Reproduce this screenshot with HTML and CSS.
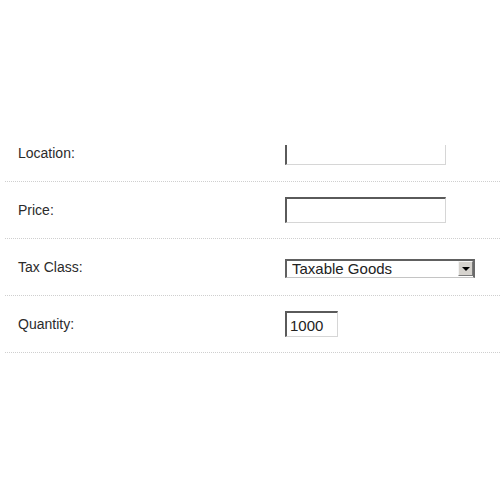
FILE: index.html
```html
<!DOCTYPE html>
<html lang="en">
<head>
  <meta charset="UTF-8">
  <title>Product Options</title>
  <link rel="stylesheet" href="styles.css">
</head>
<body>
  <div class="form">
    <!-- location -->
    <div class="row">
      <label class="label" for="location">Location:</label>
      <div class="field">
        <div class="clip">
          <input type="text" id="location" class="text wide">
        </div>
      </div>
    </div>

    <div class="row">
      <label class="label" for="price">Price:</label>
      <div class="field">
        <input type="text" id="price" class="text wide">
      </div>
    </div>

    <div class="row">
      <label class="label" for="taxClass">Tax Class:</label>
      <div class="field">
        <div class="select-box">
          <select id="taxClass" class="select">
            <option>Taxable Goods</option>
            <option>None</option>
          </select>
          <span class="select-btn"><span class="arrow"></span></span>
        </div>
      </div>
    </div>

    <div class="row">
      <label class="label" for="qty">Quantity:</label>
      <div class="field">
        <input type="text" id="qty" class="text short" value="1000">
      </div>
    </div>
  </div>
</body>
</html>
```

FILE: styles.css
```css
body {
  margin: 0;
  padding: 125px 0 0 5px;
  background: #fff;
  font-family: "Liberation Sans", Arial, sans-serif;
  color: #2b2b2b;
}
.form {
  width: 495px;
}
.row {
  display: grid;
  grid-template-columns: 280px 1fr;
  align-items: center;
  height: 56px;
  border-bottom: 1px dotted #cfcfcf;
}
.label {
  padding-left: 13px;
  font-size: 14px;
}
.clip {
  height: 20px;
  margin-top: 4px;
  overflow: hidden;
}
.clip .text {
  margin-top: -6px;
}
.text {
  display: block;
  box-sizing: border-box;
  height: 26px;
  padding: 2px 3px 0;
  border-style: solid;
  border-width: 2px 1px 1px 2px;
  border-color: #5a5a5a #d6d6d6 #d6d6d6 #5a5a5a;
  background: #fff;
  font-family: "Liberation Sans", Arial, sans-serif;
  font-size: 15px;
  color: #222;
  outline: none;
}
.wide {
  width: 161px;
}
.short {
  width: 53px;
}
.select-box {
  position: relative;
  width: 190px;
  height: 19px;
  margin-top: 3px;
}
.select {
  display: block;
  box-sizing: border-box;
  width: 190px;
  height: 19px;
  padding: 0 0 1px 5px;
  border-style: solid;
  border-width: 2px 2px 1px 2px;
  border-color: #606060 #6a6a6a #c4c4c4 #606060;
  border-radius: 0;
  background: #fff;
  appearance: none;
  -webkit-appearance: none;
  font-family: "Liberation Sans", Arial, sans-serif;
  font-size: 15px;
  line-height: 15px;
  color: #222;
}
.select-btn {
  position: absolute;
  top: 2px;
  right: 2px;
  box-sizing: border-box;
  width: 15px;
  height: 15px;
  background: #d6d3ce;
  border-style: solid;
  border-width: 1px;
  border-color: #f4f4f4 #7a7a7a #7a7a7a #f4f4f4;
  display: flex;
  align-items: center;
  justify-content: center;
}
.arrow {
  width: 0;
  height: 0;
  border-left: 4px solid transparent;
  border-right: 4px solid transparent;
  border-top: 4px solid #000;
  margin-top: 1px;
}
```
